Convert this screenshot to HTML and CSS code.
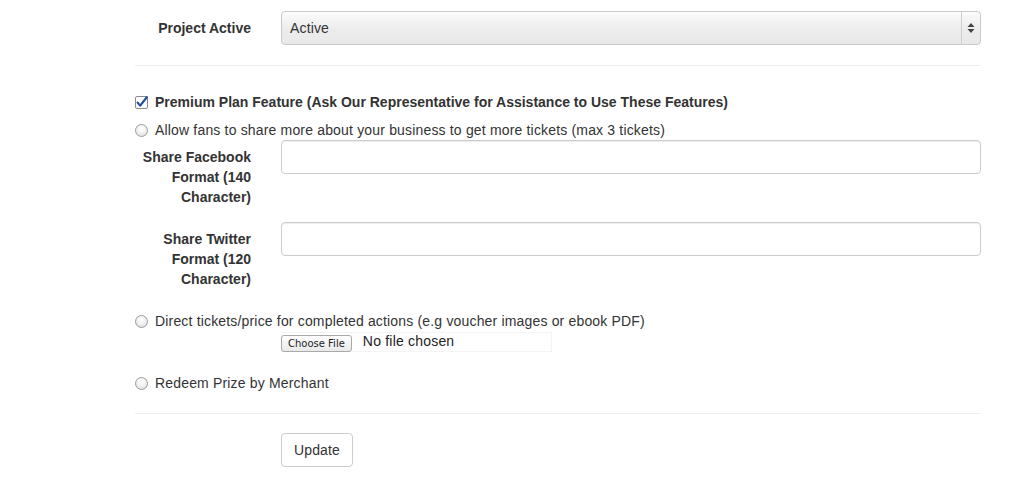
FILE: index.html
```html
<!DOCTYPE html>
<html>
<head>
<meta charset="utf-8">
<link rel="stylesheet" href="styles.css">
</head>
<body>
<form class="form">
  <div class="row row-first">
    <label class="label">Project Active</label>
    <div class="field">
      <div class="select">
        <span class="select-text">Active</span>
        <span class="select-arrows">
          <svg width="8" height="12" viewBox="0 0 8 12"><path d="M4 1 L7.5 5 L0.5 5 Z" fill="#444"/><path d="M4 11 L7.5 7 L0.5 7 Z" fill="#444"/></svg>
        </span>
      </div>
    </div>
  </div>
  <hr class="sep">
  <div class="option option-check">
    <span class="checkbox">
      <svg width="13" height="13" viewBox="0 0 13 13"><rect x="0.5" y="0.5" width="12" height="12" rx="1.5" fill="#fff" stroke="#8a8a8a"/><path d="M2.6 6.6 L5.2 9.6 L11.8 1.2" fill="none" stroke="#1f4f9e" stroke-width="2.2" stroke-linecap="round" stroke-linejoin="round"/></svg>
    </span>
    <span class="bold">Premium Plan Feature (Ask Our Representative for Assistance to Use These Features)</span>
  </div>
  <div class="option option-share">
    <span class="radio"></span>
    <span class="opt-text">Allow fans to share more about your business to get more tickets (max 3 tickets)</span>
  </div>
  <div class="row">
    <label class="label">Share Facebook Format (140 Character)</label>
    <div class="field"><input class="input" type="text"></div>
  </div>
  <div class="row">
    <label class="label">Share Twitter Format (120 Character)</label>
    <div class="field"><input class="input" type="text"></div>
  </div>
  <div class="option option-direct">
    <span class="radio"></span>
    <span class="opt-text">Direct tickets/price for completed actions (e.g voucher images or ebook PDF)</span>
  </div>
  <div class="file-row">
    <div class="file">
      <span class="file-btn">Choose File</span>
      <span class="file-text">No file chosen</span>
    </div>
  </div>
  <div class="option option-redeem">
    <span class="radio"></span>
    <span class="opt-text">Redeem Prize by Merchant</span>
  </div>
  <hr class="sep sep-bottom">
  <div class="actions">
    <button class="btn" type="button">Update</button>
  </div>
</form>
</body>
</html>
```

FILE: styles.css
```css
html, body {
  margin: 0;
  padding: 0;
  background: #fff;
}
body {
  font-family: "Liberation Sans", Arial, sans-serif;
  font-size: 14px;
  line-height: 20px;
  color: #333;
}
.form {
  width: 846px;
  margin-left: 135px;
  padding-top: 11px;
}
.row {
  display: flex;
  gap: 30px;
  margin-bottom: 15px;
}
.label {
  width: 116px;
  flex: none;
  text-align: right;
  font-weight: bold;
  padding-top: 7px;
  line-height: 20px;
}
.field {
  width: 700px;
  flex: none;
}
.select {
  display: flex;
  height: 34px;
  box-sizing: border-box;
  border: 1px solid #c9c9c9;
  border-radius: 4px;
  background: linear-gradient(#fbfbfb, #ececec 55%, #e9e9e9);
  box-shadow: inset 0 1px 0 #fff;
}
.select-text {
  flex: 1;
  padding-left: 8px;
  line-height: 32px;
  color: #333;
  letter-spacing: 0.15px;
}
.select-arrows {
  width: 18px;
  border-left: 1px solid #cfcfcf;
  display: flex;
  align-items: center;
  justify-content: center;
}
.sep {
  border: 0;
  border-top: 1px solid #eee;
  margin: 20px 0 20px 0;
  height: 0;
}
.row-first {
  margin-bottom: 0;
}
.option {
  display: flex;
  align-items: center;
  height: 20px;
}
.option-check {
  margin-top: 26px;
}
.option-share {
  margin-top: 8px;
}
.option-direct {
  margin-top: 22px;
}
.option-redeem {
  margin-top: 21px;
}
.opt-text {
  letter-spacing: 0.17px;
}
.bold {
  font-weight: bold;
}
.checkbox {
  width: 13px;
  height: 13px;
  margin-right: 7px;
  display: flex;
}
.radio {
  width: 11px;
  height: 11px;
  border-radius: 50%;
  border: 1px solid #9c9c9c;
  background: radial-gradient(circle at 50% 35%, #fff 0%, #f3f3f3 45%, #d6d6d6 100%);
  margin-right: 7px;
  flex: none;
}
.input {
  display: block;
  width: 700px;
  height: 34px;
  box-sizing: border-box;
  border: 1px solid #ccc;
  border-radius: 4px;
  margin: 0;
  padding: 6px 12px;
  font: inherit;
  box-shadow: inset 0 1px 1px rgba(0,0,0,0.075);
}
.file-row {
  padding-left: 146px;
  margin-top: 1px;
}
.file {
  width: 271px;
  height: 20px;
  border: 1px solid #f4f4f4;
  box-sizing: border-box;
  display: flex;
  align-items: flex-start;
}
.file-btn {
  display: inline-block;
  height: 17px;
  box-sizing: border-box;
  margin-top: 2px;
  margin-left: -1px;
  padding: 0 6px;
  border: 1px solid #a9a9a9;
  border-radius: 3px;
  background: linear-gradient(#fff, #e9e9e9);
  font-family: "DejaVu Sans", sans-serif;
  font-size: 10px;
  line-height: 15px;
  color: #222;
}
.file-text {
  margin-left: 11px;
  line-height: 16px;
  color: #222;
  letter-spacing: 0.2px;
}
.sep-bottom {
  margin-top: 20px;
  margin-bottom: 19px;
}
.actions {
  padding-left: 146px;
}
.btn {
  width: 72px;
  height: 34px;
  box-sizing: border-box;
  border: 1px solid #ccc;
  border-radius: 4px;
  background: #fff;
  font-family: "Liberation Sans", Arial, sans-serif;
  font-size: 14px;
  color: #333;
  padding: 0;
  margin: 0;
  letter-spacing: 0.15px;
}
```
